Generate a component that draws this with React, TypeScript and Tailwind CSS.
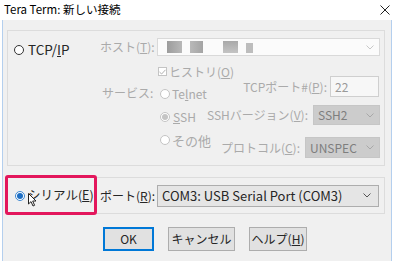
import React from 'react';

const Chevron = ({ color }: { color: string }) => (
  <svg width="8" height="5" viewBox="0 0 8 5">
    <path d="M0.5 0.5 L4 4 L7.5 0.5" fill="none" stroke={color} strokeWidth="1" />
  </svg>
);

const Radio = ({ checked = false, disabled = false }: { checked?: boolean; disabled?: boolean }) => {
  const ring = disabled ? 'border-[#c4c4c4]' : checked ? 'border-[#3c87d0]' : 'border-[#333333]';
  return (
    <span className={`w-[10px] h-[10px] rounded-full border bg-white flex items-center justify-center shrink-0 ${ring}`}>
      {checked && (
        <span className={`w-[6px] h-[6px] rounded-full ${disabled ? 'bg-[#c4c4c4]' : 'bg-[#1e6fc4]'}`} />
      )}
    </span>
  );
};

const App = () => {
  const gray = 'text-[#aaaaaa]';
  return (
    <div className="w-[400px] h-[261px] bg-white overflow-hidden font-['Noto_Sans_CJK_JP','Noto_Sans',sans-serif] text-[12px] leading-none text-[#262626] whitespace-nowrap">
      {/* title bar */}
      <div className="h-[20px] flex items-center justify-between pl-[4px] pr-[10px]">
        <span className="text-[11.5px] text-black">Tera Term: 新しい接続</span>
        <svg width="10" height="10" viewBox="0 0 10 10">
          <path d="M0.5 0.5 L9.5 9.5 M9.5 0.5 L0.5 9.5" stroke="#222" strokeWidth="1" />
        </svg>
      </div>

      <div className="relative ml-[2px] w-[390px] h-[241px] border-x border-[#b4cfee] bg-[#f0f0f0] pt-[10px] pl-[4px]">
        {/* TCP/IP group */}
        <div className="w-[378px] h-[136px] border border-[#dcdcdc] flex">
          <div className="w-[92px] pl-[6px] pt-[10px]">
            <div className="h-[18px] flex items-center gap-[4px]">
              <Radio />
              <span className="text-[13.5px]">TCP/<span className="underline">I</span>P</span>
            </div>
          </div>

          <div className={`w-[57px] pt-[7px] ${gray}`}>
            <div className="h-[18px] flex items-center">ホスト(<span className="underline">T</span>):</div>
            <div className="h-[16px] mt-[29px] flex items-center pl-[2px]">サービス:</div>
          </div>

          <div className="w-[223px] pt-[7px]">
            <div className="h-[18px] border border-[#d9d9d9] bg-[#fbfbfb] flex items-center pl-[9px] pr-[5px]">
              <div className="flex items-center gap-[8px] flex-1 blur-[0.6px]">
                <span className="w-[15px] h-[12px] bg-[linear-gradient(90deg,#9c9c9c,#b8b8b8)]" />
                <span className="w-[13px] h-[12px] bg-[linear-gradient(90deg,#b9b9b9,#a4a4a4)]" />
                <span className="w-[4px]" />
                <span className="w-[15px] h-[12px] bg-[linear-gradient(180deg,#a9a9a9,#c4c4c4)]" />
                <span className="w-[7px] h-[10px] mt-[2px] bg-[#bdbdbd]" />
              </div>
              <Chevron color="#c8c8c8" />
            </div>

            <div className="h-[9px] mt-[11px] flex items-center gap-[2px] pl-[1px]">
              <span className="w-[9px] h-[9px] border border-[#c4c4c4] bg-white flex items-center justify-center">
                <svg width="7" height="6" viewBox="0 0 7 6">
                  <path d="M0.5 3 L2.6 5 L6.5 0.8" fill="none" stroke="#b0b0b0" strokeWidth="1" />
                </svg>
              </span>
              <span className={gray}>ヒストリ(<span className="underline">O</span>)</span>
            </div>

            <div className="flex">
              <div className={`w-[49px] pt-[10px] pl-[3px] ${gray}`}>
                <div className="h-[16px] flex items-center gap-[2px]">
                  <Radio disabled />
                  <span>Te<span className="underline">l</span>net</span>
                </div>
                <div className="h-[16px] mt-[7px] flex items-center gap-[3px]">
                  <Radio disabled checked />
                  <span><span className="underline">S</span>SH</span>
                </div>
                <div className="h-[16px] mt-[7px] flex items-center gap-[2px]">
                  <Radio disabled />
                  <span className="text-[13px]">その他</span>
                </div>
              </div>

              <div className={`flex-1 flex flex-col items-end ${gray}`}>
                <div className="h-[21px] flex items-center">
                  <span>TCPポート#(<span className="underline">P</span>):</span>
                  <span className="w-[49px] h-[21px] ml-[3px] mr-[1px] border border-[#cfcfcf] bg-[#f7f7f7] flex items-center pl-[4px] text-[#9a9a9a]">22</span>
                </div>
                <div className="h-[20px] mt-[8px] flex items-center">
                  <span>SSHバージョン(<span className="underline">V</span>):</span>
                  <span className="w-[67px] h-[20px] ml-[5px] border border-[#c6c6c6] bg-[#cccccc] flex items-center justify-between pl-[4px] pr-[5px] text-[#7e7e7e]">
                    SSH2
                    <Chevron color="#a8a8a8" />
                  </span>
                </div>
                <div className="h-[21px] mt-[12px] flex items-center">
                  <span>プロトコル(<span className="underline">C</span>):</span>
                  <span className="w-[75px] h-[21px] ml-[5px] border border-[#c6c6c6] bg-[#cccccc] flex items-center justify-between pl-[4px] pr-[5px] text-[#7e7e7e]">
                    UNSPEC
                    <Chevron color="#a8a8a8" />
                  </span>
                </div>
              </div>
            </div>
          </div>
        </div>

        {/* serial group */}
        <div className="w-[378px] h-[37px] mt-[11px] border border-[#dcdcdc] flex items-center">
          <div className="w-[92px] pl-[7px] flex items-center gap-[3px]">
            <Radio checked />
            <span className="text-[12.5px]">シリアル(<span className="underline">E</span>)</span>
          </div>
          <div className="w-[57px]">ポート(<span className="underline">R</span>):</div>
          <div className="w-[222px] h-[22px] border border-[#adadad] bg-[#e5e5e5] flex items-center justify-between pl-[4px] pr-[7px]">
            <span className="text-[13px]">COM3: USB Serial Port (COM3)</span>
            <Chevron color="#555" />
          </div>
        </div>

        {/* buttons */}
        <div className="flex gap-[14px] ml-[96px] mt-[13px]">
          <button className="w-[51px] h-[24px] border-2 border-[#0078d7] bg-[#e1e1e1] text-[12px]">OK</button>
          <button className="w-[67px] h-[24px] border border-[#adadad] bg-[#e1e1e1] text-[12px]">キャンセル</button>
          <button className="w-[58px] h-[24px] border border-[#adadad] bg-[#e1e1e1] text-[12px]">ヘルプ(<span className="underline">H</span>)</button>
        </div>

        {/* highlight annotation */}
        <div className="absolute left-[2px] top-[155px] w-[92px] h-[40px] border-[3px] border-[#e3175c] rounded-[3px]" />

        {/* mouse pointer */}
        <svg className="absolute left-[25px] top-[173px]" width="9" height="14" viewBox="0 0 9 14">
          <path d="M0.5 0.5 L0.5 11 L3 8.6 L5 13 L6.6 12.3 L4.7 8 L8 8 Z" fill="white" stroke="#222" strokeWidth="1" strokeLinejoin="round" />
        </svg>
      </div>
    </div>
  );
};

export default App;
